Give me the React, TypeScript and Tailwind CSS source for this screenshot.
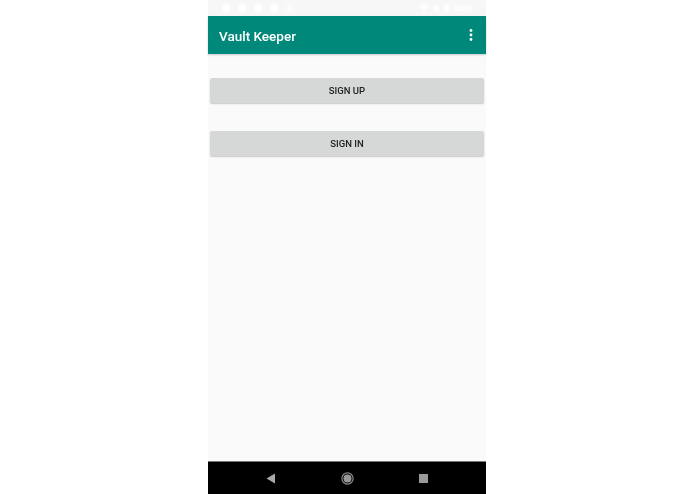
export default function App() {
  return (
    <div className="h-[494px] w-[695px] bg-white flex justify-start pl-[208px] overflow-hidden" style={{ fontFamily: 'Roboto, sans-serif' }}>
      <div className="w-[278px] h-full flex flex-col bg-[#fafafa]">
        <div className="h-4 bg-[#f7f7f7] flex items-center justify-between pl-[14px] pr-[14px] shrink-0">
          <div className="flex items-center gap-[8px] blur-[1px]">
            <div className="w-2 h-2 rounded-full bg-white" />
            <div className="w-2 h-2 rounded-full bg-white" />
            <div className="w-2 h-2 rounded-[2px] bg-white" />
            <div className="w-2 h-2 rounded-full bg-white" />
            <div className="w-2 h-2 rounded-full bg-[#fbfbfb]" />
          </div>
          <div className="flex items-center gap-[5px] blur-[1px]">
            <svg width="10" height="8" viewBox="0 0 10 8"><polygon points="0,1 10,1 5,8" fill="#fff" /></svg>
            <div className="w-[5px] h-[5px] bg-white" />
            <div className="w-[5px] h-2 bg-white" />
            <div className="w-[18px] h-[6px] bg-[#fcfcfc]" />
          </div>
        </div>
        <div className="h-[38px] shrink-0 bg-[#00897b] flex items-center justify-between pl-[11px] pr-[13px] pt-[2px] shadow-[0_1px_2px_rgba(0,0,0,0.2)]">
          <span className="text-white text-[13.5px] font-medium blur-[0.3px]">Vault Keeper</span>
          <svg width="4" height="14" viewBox="0 0 4 14" className="text-white blur-[0.2px] mb-[2px]">
            <circle cx="2" cy="2.5" r="1.4" fill="currentColor" />
            <circle cx="2" cy="7" r="1.4" fill="currentColor" />
            <circle cx="2" cy="11.5" r="1.4" fill="currentColor" />
          </svg>
        </div>
        <div className="flex-1 flex flex-col px-[2px] pt-[24px] gap-[28px]">
          <button className="h-[25px] pt-[1px] rounded-[2px] bg-[#d6d7d7] text-[#222] text-[9.5px] font-medium shadow-[0_1px_1.5px_rgba(0,0,0,0.2)] blur-[0.3px]">SIGN UP</button>
          <button className="h-[25px] pt-[1px] rounded-[2px] bg-[#d6d7d7] text-[#222] text-[9.5px] font-medium shadow-[0_1px_1.5px_rgba(0,0,0,0.2)] blur-[0.3px]">SIGN IN</button>
        </div>
        <div className="h-[33px] shrink-0 bg-black border-t border-[#777] flex items-center justify-center gap-[65px]">
          <svg width="10" height="11" viewBox="0 0 10 11" className="blur-[0.3px]"><polygon points="9,0.5 9,10.5 0.5,5.5" fill="#aaa" /></svg>
          <svg width="13" height="13" viewBox="0 0 13 13" className="blur-[0.3px]"><circle cx="6.5" cy="6.5" r="5.6" fill="none" stroke="#888" strokeWidth="1.2" /><circle cx="6.5" cy="6.5" r="4" fill="#999" /></svg>
          <div className="w-[9px] h-[9px] bg-[#999] blur-[0.3px]" />
        </div>
      </div>
    </div>
  );
}
